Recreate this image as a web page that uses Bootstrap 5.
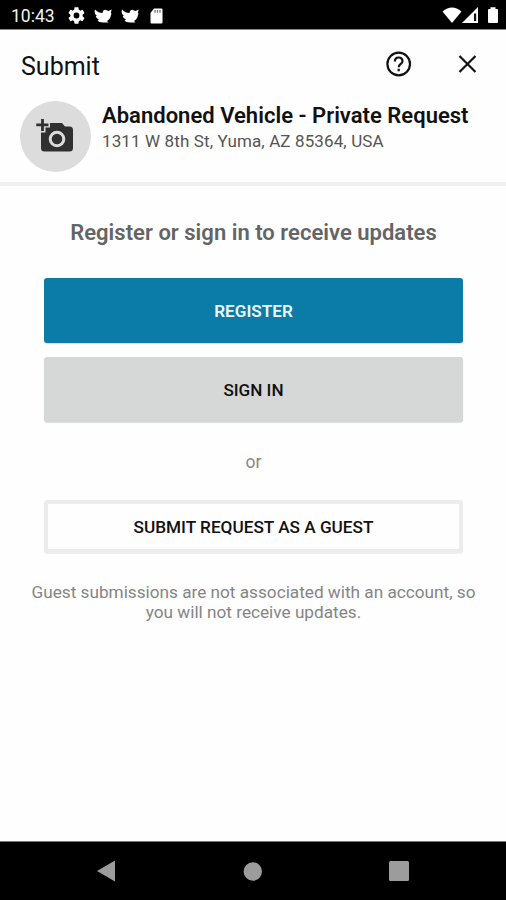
<!DOCTYPE html>
<html lang="en">
<head>
<meta charset="utf-8">
<meta name="viewport" content="width=device-width, initial-scale=1">
<title>Submit</title>
<link href="https://cdn.jsdelivr.net/npm/bootstrap@5.3.0/dist/css/bootstrap.min.css" rel="stylesheet">
<style>
body{font-family:Roboto,"Liberation Sans",sans-serif;background:#fefefe;color:#111}
svg{display:block;flex:none}
.status-bar{height:30px;background:#000;border-bottom:1px solid #8a8a8a;padding:2px 7px 0 11px}
.clock{font-size:17.5px;line-height:28px;width:57px;color:#f2f2f2}
.bird{margin-left:9px}
.sd-card{margin-left:10px}
.top-bar{height:156px;border-bottom:4px solid #f0f0f0;padding-left:20px}
.title-row{height:71px;padding:0 30px 3px 1px}
.screen-title{font-size:25px;line-height:30px;padding-top:5px}
.help{margin-right:46px}
.photo{width:71px;height:71px;background:#dcdcdc}
.req-text{padding:2px 0 0 11px}
.req-name{font-size:22px;line-height:26px;font-weight:600;letter-spacing:.02px}
.req-place{font-size:17px;line-height:22px;color:#555;letter-spacing:.12px;padding-top:1px}
.content{padding:0 43px 0 44px}
.prompt{font-size:22px;line-height:28px;font-weight:600;color:#646464;margin-top:33px;letter-spacing:.02px}
.act{height:65px;border-radius:3px;font-size:17.100px;line-height:24px;font-weight:500;border:0;padding:1px 0 0}
.act-main{background:#0b7ba8;color:#edf6fb;font-weight:600;margin-top:31px;box-shadow:0 1px 1px #0002}
.act-alt{background:#d6d7d7;color:#111;margin-top:14px;box-shadow:0 1px 1px #0002}
.act-guest{height:53px;font-size:17.200px;background:#fefefe;border:4px solid #ececec;margin-top:26px;padding:0;color:#111;box-shadow:0 1px 1px #0001}
.or{font-size:17.500px;line-height:24px;color:#888;margin-top:28px}
.note{font-size:17.200px;line-height:20px;color:#858585;margin:29px -20px 0}
.nav-keys{height:59px;background:#000;border-top:1px solid #777;padding:0 97px 0 97px}
</style>
</head>
<body>
<div class="d-flex flex-column vh-100 overflow-hidden">
  <header class="status-bar d-flex align-items-center">
    <span class="clock">10:43</span>
    <svg width="17" height="17" viewBox="2 2 20 20" fill="#fff"><path d="M19.14 12.94c.04-.3.06-.61.06-.94 0-.32-.02-.64-.07-.94l2.03-1.58a.49.49 0 0 0 .12-.61l-1.92-3.32a.49.49 0 0 0-.59-.22l-2.39.96c-.5-.38-1.03-.7-1.62-.94l-.36-2.54a.48.48 0 0 0-.48-.41h-3.84c-.24 0-.43.17-.47.41l-.36 2.54c-.59.24-1.13.57-1.62.94l-2.39-.96a.48.48 0 0 0-.59.22L2.74 8.87c-.12.21-.08.47.12.61l2.03 1.58c-.05.3-.09.63-.09.94s.02.64.07.94l-2.03 1.58a.49.49 0 0 0-.12.61l1.92 3.32c.12.22.37.29.59.22l2.39-.96c.5.38 1.03.7 1.62.94l.36 2.54c.05.24.24.41.48.41h3.84c.24 0 .44-.17.47-.41l.36-2.54c.59-.24 1.13-.56 1.62-.94l2.39.96c.22.08.47 0 .59-.22l1.92-3.32a.48.48 0 0 0-.12-.61zM12 15.4a3.4 3.4 0 1 1 0-6.8 3.4 3.4 0 0 1 0 6.8z"/></svg>
    <svg class="bird" width="18" height="16" viewBox="0 0 18 16" fill="#fff"><path id="bird" d="M1 1.500C3 4 6 5 8.500 5C9 2 11 1 13 2.500L14.500 3L17.800 1.500L16.800 4.500L17.500 6C16.500 7 17 9.500 15 11.500L13 13L14.500 14.500H9.500C6 14.500 4.500 13.500 3.500 12.500L5 11.500C3 10.500 2 9.500 1.800 8L3 8C1 6.500 0 4 1 1.500Z"/></svg>
    <svg class="bird" width="18" height="16" viewBox="0 0 18 16" fill="#fff"><use href="#bird"/></svg>
    <svg class="sd-card me-auto" width="15" height="16" viewBox="0 0 14 16"><path fill="#fff" d="M4.500 .5H12Q13 .5 13 1.500V14.500Q13 15.500 12 15.500H2Q1 15.500 1 14.500V5Z"/><path stroke="#777" stroke-width="1.300" d="M5.500 2V4.800M8 2V4.800M10.500 2V4.800"/></svg>
    <svg width="20" height="17" viewBox="0 0 20 17" fill="#fff"><path d="M.5 4.500Q10-3.500 19.500 4.500L10 16Z"/></svg>
    <svg width="17" height="17" viewBox="0 0 17 17"><path fill="#fff" d="M16 0V16H0Z"/><path fill="#111" d="M12 6.500h2.200v7.500h-2.200z"/></svg>
    <svg class="ms-2" width="12" height="17" viewBox="0 0 12 17" fill="#fff"><path d="M1 3Q1 2 2 2H3.500V.3H8.500V2H10Q11 2 11 3V15Q11 16 10 16H2Q1 16 1 15Z"/></svg>
  </header>

  <section class="top-bar">
    <div class="title-row d-flex align-items-center">
      <h1 class="screen-title fw-normal mb-0 me-auto">Submit</h1>
      <svg class="help" width="26" height="26" viewBox="0 0 26 26" fill="none" stroke="#111" stroke-width="2.200"><circle cx="12.700" cy="13" r="11.300"/><path d="M8.900 10.500C8.900 5.200 16.500 5.200 16.500 10.200C16.500 13 12.700 13 12.700 16.200M12.700 17.700V20.200"/></svg>
      <svg width="18" height="18" viewBox="0 0 18 18" fill="none" stroke="#111" stroke-width="2.200"><path d="M1.500 1L17.500 17M17.500 1L1.500 17"/></svg>
    </div>
    <div class="d-flex">
      <div class="photo rounded-circle d-flex align-items-center justify-content-center">
        <svg width="39" height="36" viewBox="1 2 39 36"><path fill="#303030" d="M15 6H27L30 9.500H34.500Q38 9.500 38 13V31Q38 34.500 34.500 34.500H9.500Q6 34.500 6 31V15.500H10.500V10.500H15Z"/><circle cx="22" cy="22" r="6.800" fill="#303030" stroke="#dcdcdc" stroke-width="3"/><path fill="none" stroke="#303030" stroke-width="2.800" d="M7.500 1.500V14M1.300 7.800H13.500"/></svg>
      </div>
      <div class="req-text text-nowrap">
        <div class="req-name">Abandoned Vehicle - Private Request</div>
        <div class="req-place">1311 W 8th St, Yuma, AZ 85364, USA</div>
      </div>
    </div>
  </section>

  <main class="content d-flex flex-column text-center flex-grow-1">
    <h2 class="prompt mb-0 text-nowrap">Register or sign in to receive updates</h2>
    <button class="btn act act-main" type="button">REGISTER</button>
    <button class="btn act act-alt" type="button">SIGN IN</button>
    <div class="or">or</div>
    <button class="btn act act-guest" type="button">SUBMIT REQUEST AS A GUEST</button>
    <p class="note text-nowrap">Guest submissions are not associated with an account, so<br>you will not receive updates.</p>
  </main>

  <footer class="nav-keys d-flex align-items-center justify-content-between">
    <svg width="19" height="22" viewBox="0 0 19 22" fill="#9c9c9c"><path d="M18 .5V21.500L0 11Z"/></svg>
    <svg width="19" height="19" viewBox="0 0 19 19" fill="#9c9c9c"><circle cx="9.800" cy="9.500" r="9.200"/></svg>
    <svg width="20" height="20" viewBox="0 0 20 20" fill="#9c9c9c"><rect width="20" height="20" rx="1.500"/></svg>
  </footer>
</div>
<script src="https://cdn.jsdelivr.net/npm/bootstrap@5.3.0/dist/js/bootstrap.bundle.min.js"></script>
</body>
</html>
